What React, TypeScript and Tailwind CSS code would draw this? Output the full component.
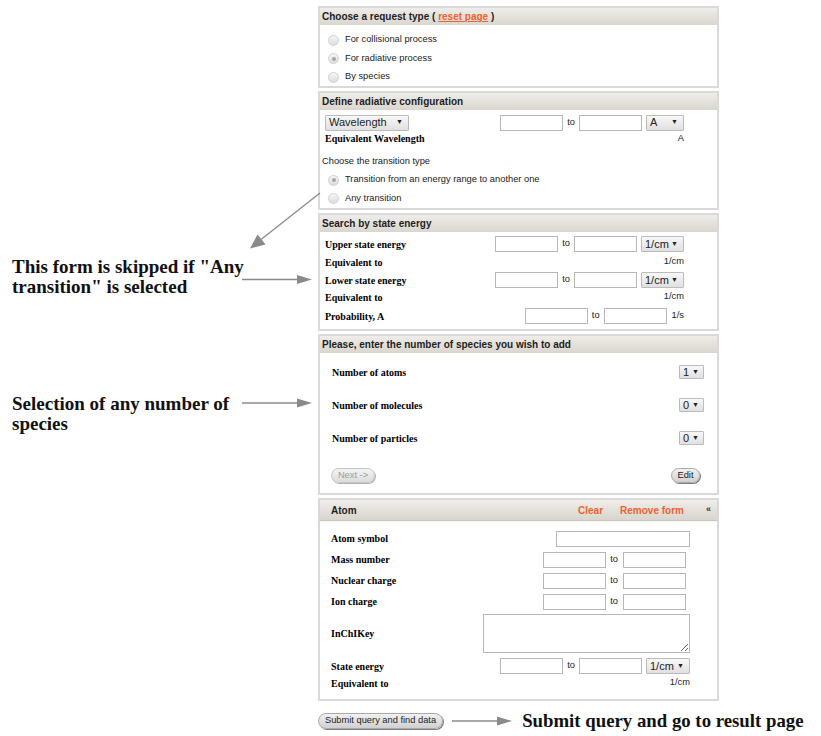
import React from 'react';

const serif = "font-['Liberation_Serif','Times_New_Roman',serif]";

function Panel({ title, className, children }: { title: React.ReactNode; className: string; children: React.ReactNode }) {
  return (
    <div className={`border-2 border-[#d9d9d9] bg-white flex flex-col ${className}`}>
      <div className="h-[17px] shrink-0 flex items-center px-[2px] bg-linear-to-b from-[#efedea] to-[#dad6cf] text-[10px] font-bold text-[#1e1e1e]">
        {title}
      </div>
      {children}
    </div>
  );
}

function Radio({ checked = false, label }: { checked?: boolean; label: string }) {
  return (
    <div className="h-[18.5px] flex items-center pl-[8px] gap-[6px] text-[9.3px] text-[#222]">
      <span className="w-[11px] h-[11px] rounded-full border border-[#d2d2d2] bg-linear-to-b from-[#f6f6f6] to-[#dcdcdc] flex items-center justify-center">
        {checked && <span className="w-[4px] h-[4px] rounded-full bg-[#a5a5a5]" />}
      </span>
      <span>{label}</span>
    </div>
  );
}

function Field({ className = 'w-[63px]' }: { className?: string }) {
  return <input readOnly className={`h-[16px] border border-[#b7b7b7] bg-white ${className}`} />;
}

function Select({ label, className }: { label: string; className: string }) {
  return (
    <div className={`h-[16px] flex items-center justify-between pl-[3px] pr-[5px] border border-[#bcbcbc] rounded-[1px] bg-linear-to-b from-[#f8f8f8] to-[#e0e0e0] text-[11px] text-[#222] ${className}`}>
      <span>{label}</span>
      <span className="text-[7px]">▼</span>
    </div>
  );
}

function To({ gap = 'ml-[4px]' }: { gap?: string }) {
  return <span className={`text-[9.3px] text-[#222] ${gap} mr-[4px]`}>to</span>;
}

function Label({ children }: { children: React.ReactNode }) {
  return <span className={`${serif} text-[10px] font-bold text-black`}>{children}</span>;
}

function Range({ unit, unitClass }: { unit?: string; unitClass?: string }) {
  return (
    <div className="ml-auto flex items-center">
      <Field />
      <To />
      <Field />
      {unit && <Select label={unit} className={`ml-[4px] ${unitClass}`} />}
    </div>
  );
}

function Pill({ children, disabled = false, className = '' }: { children: React.ReactNode; disabled?: boolean; className?: string }) {
  return (
    <button
      className={`h-[15px] px-[6px] rounded-full border text-[9.3px] leading-none bg-linear-to-b ${
        disabled
          ? 'border-[#c4c4c4] from-[#f4f4f4] to-[#dcdcdc] text-[#9c9c9c] shadow-[1px_1px_0_#b4b4b4]'
          : 'border-[#a9a9a9] from-[#f2f2f2] to-[#d0d0d0] text-[#222] shadow-[1px_1px_0_#7e7e7e]'
      } ${className}`}
    >
      {children}
    </button>
  );
}

function ArrowRight() {
  return (
    <svg width="60" height="10" viewBox="0 0 60 10" className="shrink-0">
      <line x1="0" y1="5" x2="46" y2="5" stroke="#8a8a8a" strokeWidth="1.3" />
      <polygon points="45,0.5 60,5 45,9.5" fill="#8a8a8a" />
    </svg>
  );
}

export default function App() {
  return (
    <div className="relative w-[821px] h-[736px] bg-white overflow-hidden flex font-['Liberation_Sans',Arial,sans-serif]">
      <div className={`w-[318px] shrink-0 pl-[12px] pt-[257px] ${serif} text-[19px] leading-[20px] font-bold text-[#111]`}>
        <p>
          This form is skipped if "Any
          <br />
          transition" is selected
        </p>
        <p className="mt-[97px]">
          Selection of any number of
          <br />
          species
        </p>
      </div>

      <div className="w-[401px] shrink-0 pt-[6px] flex flex-col gap-[3px]">
        <Panel
          className="h-[82px]"
          title={
            <>
              Choose a request type (&nbsp;
              <span className="text-[#f0612e] underline">reset page</span>
              &nbsp;)
            </>
          }
        >
          <div className="pt-[6px]">
            <Radio label="For collisional process" />
            <Radio checked label="For radiative process" />
            <Radio label="By species" />
          </div>
        </Panel>

        <Panel className="h-[119px]" title="Define radiative configuration">
          <div className="mt-[4.5px] h-[16px] flex items-center pl-[5px] pr-[33px]">
            <Select label="Wavelength" className="w-[84px]" />
            <Range unit="A" unitClass="w-[38px]" />
          </div>
          <div className="h-[17px] flex items-center pl-[5px] pr-[33px]">
            <Label>Equivalent Wavelength</Label>
            <span className="ml-auto text-[9.3px] text-[#222]">A</span>
          </div>
          <div className="mt-[6px] h-[18px] flex items-center pl-[2px] text-[9.3px] text-[#222]">
            Choose the transition type
          </div>
          <Radio checked label="Transition from an energy range to another one" />
          <Radio label="Any transition" />
        </Panel>

        <Panel className="h-[118px]" title="Search by state energy">
          <div className="pl-[5px] pr-[33px]">
            <div className="mt-[4px] h-[16px] flex items-center">
              <Label>Upper state energy</Label>
              <Range unit="1/cm" unitClass="w-[43px]" />
            </div>
            <div className="mt-[2px] h-[16px] flex items-center">
              <Label>Equivalent to</Label>
              <span className="ml-auto text-[9.3px] text-[#222]">1/cm</span>
            </div>
            <div className="mt-[2px] h-[16px] flex items-center">
              <Label>Lower state energy</Label>
              <Range unit="1/cm" unitClass="w-[43px]" />
            </div>
            <div className="mt-[1px] h-[16px] flex items-center">
              <Label>Equivalent to</Label>
              <span className="ml-auto text-[9.3px] text-[#222]">1/cm</span>
            </div>
            <div className="mt-[3px] h-[16px] flex items-center">
              <Label>Probability, A</Label>
              <div className="ml-auto flex items-center">
                <Field />
                <To />
                <Field />
                <span className="ml-[5px] text-[9.3px] text-[#222]">1/s</span>
              </div>
            </div>
          </div>
        </Panel>

        <Panel className="h-[161px]" title="Please, enter the number of species you wish to add">
          <div className="pl-[12px] pr-[13px]">
            <div className="mt-[9px] h-[20px] flex items-center justify-between">
              <Label>Number of atoms</Label>
              <Select label="1" className="w-[25px] !h-[14px] !pr-[4px]" />
            </div>
            <div className="mt-[13px] h-[20px] flex items-center justify-between">
              <Label>Number of molecules</Label>
              <Select label="0" className="w-[25px] !h-[14px] !pr-[4px]" />
            </div>
            <div className="mt-[13px] h-[20px] flex items-center justify-between">
              <Label>Number of particles</Label>
              <Select label="0" className="w-[25px] !h-[14px] !pr-[4px]" />
            </div>
          </div>
          <div className="mt-[20px] flex items-center pl-[11px] pr-[17px]">
            <Pill disabled className="w-[44px] !px-0">Next -&gt;</Pill>
            <Pill className="ml-auto w-[29px] !px-0">Edit</Pill>
          </div>
        </Panel>

        <div className="h-[203px] border-2 border-[#d9d9d9] bg-white flex flex-col">
          <div className="h-[20px] shrink-0 flex items-center pl-[11px] pr-[6px] bg-linear-to-b from-[#f0eeeb] to-[#d8d4cd] text-[10px] font-bold shadow-[0_1px_1px_#c9c6c0]">
            <span className="text-[#1e1e1e]">Atom</span>
            <span className="ml-auto text-[#f0612e]">Clear</span>
            <span className="ml-[17px] text-[#f0612e]">Remove form</span>
            <span className="ml-[22px] text-[9px] text-[#333]">«</span>
          </div>
          <div className="pl-[11px] pr-[27px]">
            <div className="mt-[10.5px] h-[16px] flex items-center">
              <Label>Atom symbol</Label>
              <Field className="ml-auto w-[134px]" />
            </div>
            {['Mass number', 'Nuclear charge', 'Ion charge'].map(l => (
              <div key={l} className="mt-[5px] h-[16px] flex items-center pr-[4px]">
                <Label>{l}</Label>
                <div className="ml-auto flex items-center">
                  <Field />
                  <To gap="ml-[4px]" />
                  <Field className="w-[63px] ml-[1px]" />
                </div>
              </div>
            ))}
            <div className="mt-[4.5px] h-[39px] flex items-center">
              <Label>InChIKey</Label>
              <textarea readOnly className="ml-auto w-[207px] h-[39px] border border-[#b7b7b7] bg-white" />
            </div>
            <div className="mt-[5px] h-[16px] flex items-center">
              <Label>State energy</Label>
              <Range unit="1/cm" unitClass="w-[44px]" />
            </div>
            <div className="mt-[1px] h-[16px] flex items-center">
              <Label>Equivalent to</Label>
              <span className="ml-auto text-[9.3px] text-[#222]">1/cm</span>
            </div>
          </div>
        </div>

        <div className="mt-[9px] h-[16px] flex items-center whitespace-nowrap">
          <Pill className="!h-[16px]">Submit query and find data</Pill>
          <span className="ml-[9px]">
            <ArrowRight />
          </span>
          <span className={`ml-[10px] ${serif} text-[18.8px] font-bold text-[#111]`}>Submit query and go to result page</span>
        </div>
      </div>

      <svg className="absolute inset-0 pointer-events-none" width="821" height="736" viewBox="0 0 821 736">
        <line x1="320" y1="193" x2="261" y2="239.5" stroke="#8a8a8a" strokeWidth="1.3" />
        <polygon points="250,248.5 257.5,234.5 265.5,244.5" fill="#8a8a8a" />
        <line x1="242" y1="279.5" x2="298" y2="279.5" stroke="#8a8a8a" strokeWidth="1.3" />
        <polygon points="297,275 312,279.5 297,284" fill="#8a8a8a" />
        <line x1="242" y1="403" x2="298" y2="403" stroke="#8a8a8a" strokeWidth="1.3" />
        <polygon points="297,398.5 312,403 297,407.5" fill="#8a8a8a" />
      </svg>
    </div>
  );
}
